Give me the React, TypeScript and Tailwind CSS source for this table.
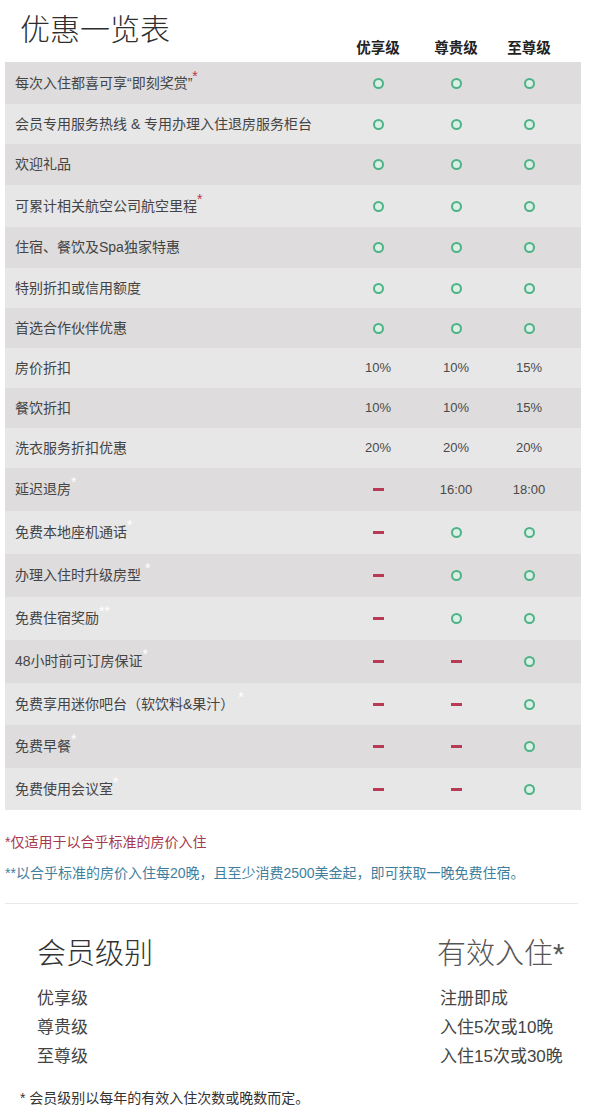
import React from "react";

type Cell = "o" | "-" | string;

const rows: { label: string; star?: string; starRed?: boolean; h: string; cells: Cell[] }[] = [
  { label: "每次入住都喜可享“即刻奖赏”", star: "*", starRed: true, h: "h-[42px]", cells: ["o", "o", "o"] },
  { label: "会员专用服务热线 & 专用办理入住退房服务柜台", h: "h-[40px]", cells: ["o", "o", "o"] },
  { label: "欢迎礼品", h: "h-[41px]", cells: ["o", "o", "o"] },
  { label: "可累计相关航空公司航空里程", star: "*", starRed: true, h: "h-[42px]", cells: ["o", "o", "o"] },
  { label: "住宿、餐饮及Spa独家特惠", h: "h-[41px]", cells: ["o", "o", "o"] },
  { label: "特别折扣或信用额度", h: "h-[40px]", cells: ["o", "o", "o"] },
  { label: "首选合作伙伴优惠", h: "h-[40px]", cells: ["o", "o", "o"] },
  { label: "房价折扣", h: "h-[40px]", cells: ["10%", "10%", "15%"] },
  { label: "餐饮折扣", h: "h-[40px]", cells: ["10%", "10%", "15%"] },
  { label: "洗衣服务折扣优惠", h: "h-[40px]", cells: ["20%", "20%", "20%"] },
  { label: "延迟退房", star: "*", h: "h-[43px]", cells: ["-", "16:00", "18:00"] },
  { label: "免费本地座机通话", star: "*", h: "h-[43px]", cells: ["-", "o", "o"] },
  { label: "办理入住时升级房型", star: " *", h: "h-[43px]", cells: ["-", "o", "o"] },
  { label: "免费住宿奖励", star: "**", h: "h-[43px]", cells: ["-", "o", "o"] },
  { label: "48小时前可订房保证", star: "*", h: "h-[43px]", cells: ["-", "-", "o"] },
  { label: "免费享用迷你吧台（软饮料&果汁）", star: " *", h: "h-[42px]", cells: ["-", "-", "o"] },
  { label: "免费早餐", star: "*", h: "h-[43px]", cells: ["-", "-", "o"] },
  { label: "免费使用会议室", star: "*", h: "h-[42px]", cells: ["-", "-", "o"] },
];

const tiers = [
  ["优享级", "注册即成"],
  ["尊贵级", "入住5次或10晚"],
  ["至尊级", "入住15次或30晚"],
];

const CellMark = ({ v }: { v: Cell }) => {
  if (v === "o")
    return <span className="block w-[11px] h-[11px] rounded-full border-2 border-[#4db386] bg-[#dcefe6]" />;
  if (v === "-") return <span className="block w-[11px] h-[3px] bg-[#b93a55]" />;
  return <span className="text-[13px] text-[#4a4a4a]">{v}</span>;
};

const App = () => {
  return (
    <div className="w-[589px] h-[1119px] bg-white text-[#444] font-['Liberation_Sans','Noto_Sans_CJK_SC',sans-serif] overflow-hidden">
      <div className="h-[62px] relative">
        <h1 className="absolute left-[20px] top-[14px] text-[30px] leading-[32px] text-[#2e2e2e] font-['Liberation_Serif','Noto_Sans_CJK_SC',serif] font-light">
          优惠一览表
        </h1>
        <div className="ml-[5px] w-[576px] grid grid-cols-[333px_80px_76px_70px_17px] pt-[38px] text-[14.5px] font-bold text-[#222]">
          <span />
          <span className="text-center">优享级</span>
          <span className="text-center">尊贵级</span>
          <span className="text-center">至尊级</span>
          <span />
        </div>
      </div>

      <div className="ml-[5px] w-[576px]">
        {rows.map((r, i) => (
          <div
            key={r.label}
            className={`grid grid-cols-[333px_80px_76px_70px_17px] items-center ${r.h} ${
              i % 2 === 0 ? "bg-[#dedcdc]" : "bg-[#e8e7e8]"
            }`}
          >
            <span className="pl-[10px] text-[14px] text-[#444] whitespace-nowrap">
              {r.label}
              {r.star && (
                <sup className={`text-[14px] ${r.starRed ? "text-[#c0304d]" : "text-white"}`}>{r.star}</sup>
              )}
            </span>
            {r.cells.map((c, j) => (
              <span key={j} className="flex justify-center">
                <CellMark v={c} />
              </span>
            ))}
            <span />
          </div>
        ))}
      </div>

      <div className="pl-[5px] mt-[22px] text-[14px] leading-[20px]">
        <p className="text-[#a6394f]">*仅适用于以合乎标准的房价入住</p>
        <p className="mt-[11px] text-[#3f7f9e]">
          **以合乎标准的房价入住每20晚，且至少消费2500美金起，即可获取一晚免费住宿。
        </p>
      </div>

      <div className="ml-[5px] w-[573px] mt-[20px] h-px bg-[#e9e9e9]" />

      <div className="grid grid-cols-[400px_1fr] pl-[37px] mt-[32px]">
        <h2 className="text-[29px] leading-[36px] text-[#333] font-light">会员级别</h2>
        <h2 className="text-[29px] leading-[36px] text-[#555] font-light">有效入住*</h2>
      </div>
      <div className="grid grid-cols-[403px_1fr] pl-[37px] mt-[12px] text-[17px] leading-[29px] text-[#444]">
        {tiers.map(([a, b]) => (
          <React.Fragment key={a}>
            <span>{a}</span>
            <span>{b}</span>
          </React.Fragment>
        ))}
      </div>

      <p className="pl-[20px] mt-[17px] text-[14px] leading-[20px] text-[#333]">
        * 会员级别以每年的有效入住次数或晚数而定。
      </p>
    </div>
  );
};

export default App;
